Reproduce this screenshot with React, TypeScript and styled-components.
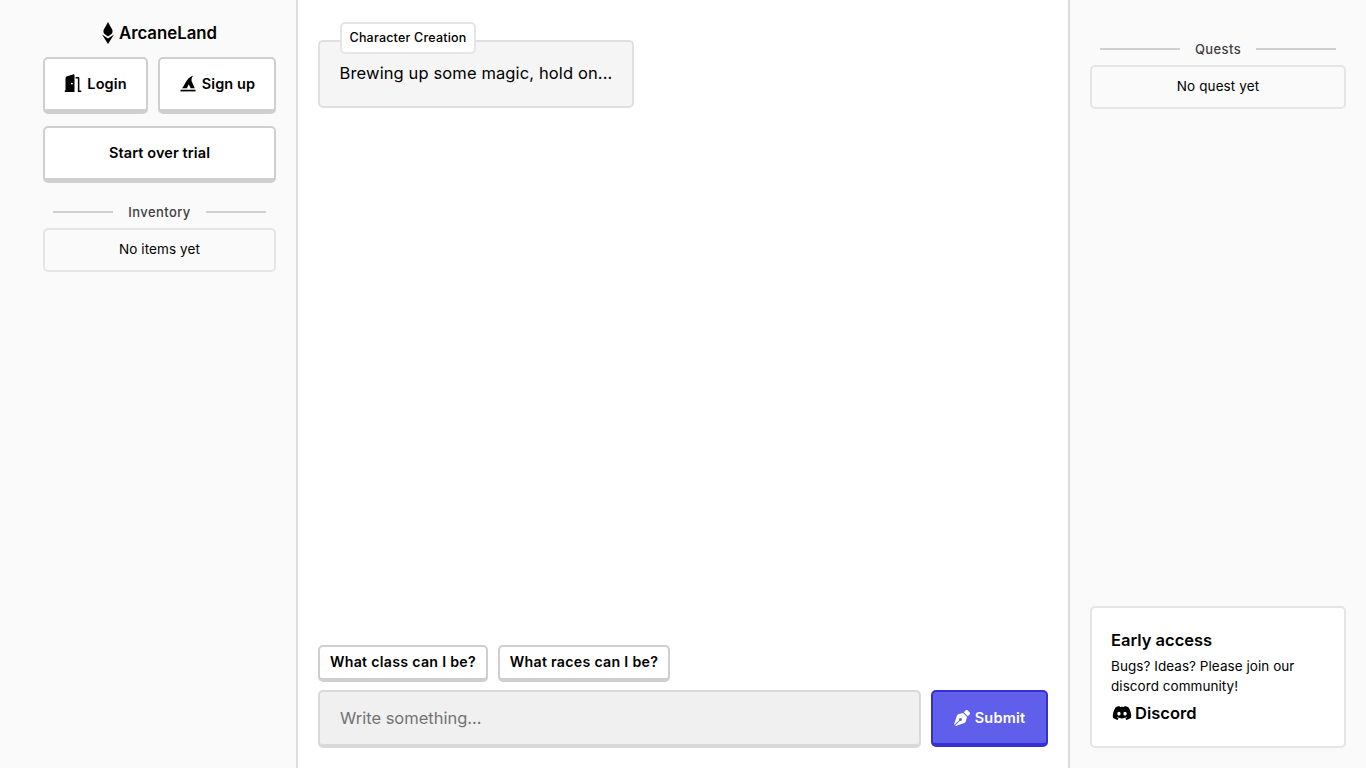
import { createGlobalStyle, styled } from "styled-components";
import { FaDiscord, FaPenNib } from "react-icons/fa";

const GlobalStyle = createGlobalStyle`
    html, body {
        margin: 0;
        padding: 0;
        height: 100%;
    }
    body {
        font-family: "Inter", "Liberation Sans", sans-serif;
        color: #000;
        background: #fff;
    }
    * {
        box-sizing: border-box;
    }
`;

const Page = styled.div`
    display: grid;
    grid-template-columns: 298px 772px 296px;
    height: 768px;
    overflow: hidden;
`;

const LeftSide = styled.aside`
    background-color: #fafafa;
    border-right: 2px solid #dcdcdc;
    padding: 20px 20px 0 43px;
    display: flex;
    flex-direction: column;
    width: 298px;
`;

const LeftInner = styled.div`
    width: 233px;
    display: flex;
    flex-direction: column;
`;

const Logo = styled.div`
    display: flex;
    align-items: center;
    justify-content: center;
    gap: 5px;
    height: 24px;
    font-size: 16.8px;
    font-weight: 600;
    margin-top: 1px;
    margin-bottom: 12px;
    svg {
        width: 12px;
        height: 22px;
    }
`;

const ButtonRow = styled.div`
    display: flex;
    gap: 10px;
    margin-bottom: 12px;
`;

const RaisedButton = styled.button<{ $width?: number }>`
    display: flex;
    align-items: center;
    justify-content: center;
    gap: 5px;
    width: ${(p) => (p.$width ? `${p.$width}px` : "auto")};
    height: 57px;
    padding: 0 4px 2px;
    background-color: #fff;
    border: 2px solid #cfcfcf;
    border-bottom-width: 5px;
    border-radius: 5px;
    color: #000;
    font-family: inherit;
    font-size: 14.5px;
    font-weight: 600;
    letter-spacing: 0.1px;
    white-space: nowrap;
    svg {
        width: 18px;
        height: 18px;
    }
`;

const InventorySection = styled.section`
    margin-top: 7px;
`;

const SectionTitle = styled.div`
    display: flex;
    align-items: center;
    gap: 15px;
    padding: 0 10px;
    height: 20px;
    font-size: 13px;
    font-weight: 500;
    letter-spacing: 0.4px;
    color: #404040;
    margin-bottom: 6px;
    &::before,
    &::after {
        content: "";
        flex: 1;
        height: 2px;
        background-color: #cfcfcf;
    }
`;

const EmptyBox = styled.div`
    height: 44px;
    padding-bottom: 2px;
    display: flex;
    align-items: center;
    justify-content: center;
    border: 2px solid #e5e5e5;
    border-radius: 5px;
    background-color: #fafafa;
    font-size: 13.5px;
    letter-spacing: 0.1px;
`;

const Main = styled.main`
    display: flex;
    flex-direction: column;
    justify-content: space-between;
    background-color: #fff;
    border-right: 2px solid #dcdcdc;
    padding: 40px 20px 20px 20px;
`;

const Bubble = styled.div`
    position: relative;
    width: 316px;
    height: 68px;
    padding-bottom: 2px;
    display: flex;
    align-items: center;
    justify-content: center;
    background-color: #f5f5f5;
    border: 2px solid #e0e0e0;
    border-radius: 5px;
    font-size: 16.5px;
    letter-spacing: 0.12px;
    white-space: nowrap;
`;

const BubbleTag = styled.span`
    position: absolute;
    left: 20px;
    top: -20px;
    height: 32px;
    width: 136px;
    padding-bottom: 1px;
    display: flex;
    align-items: center;
    justify-content: center;
    background-color: #fff;
    border: 2px solid #e5e5e5;
    border-radius: 5px;
    font-size: 12.5px;
    font-weight: 500;
    letter-spacing: 0.2px;
`;

const Composer = styled.div`
    display: flex;
    flex-direction: column;
    gap: 8px;
`;

const Suggestions = styled.div`
    display: flex;
    gap: 10px;
`;

const Suggestion = styled(RaisedButton)`
    height: 37px;
    font-size: 14.2px;
    letter-spacing: 0.28px;
    border-bottom-width: 4px;
`;

const InputRow = styled.div`
    display: flex;
    gap: 10px;
`;

const Input = styled.input`
    flex: 1;
    min-width: 0;
    height: 58px;
    padding: 0 20px;
    background-color: #f0f0f0;
    border: 2px solid #d9d9d9;
    border-bottom-width: 4px;
    border-radius: 5px;
    font-family: inherit;
    font-size: 16.5px;
    &::placeholder {
        color: #737373;
    }
`;

const SubmitButton = styled.button`
    width: 117px;
    height: 57px;
    display: flex;
    align-items: center;
    justify-content: center;
    gap: 5px;
    background-color: #5f5fec;
    border: 2px solid #3730d0;
    border-bottom-width: 4px;
    border-radius: 5px;
    color: #fff;
    font-family: inherit;
    font-size: 14.5px;
    font-weight: 600;
    letter-spacing: 0.2px;
    svg {
        width: 16px;
        height: 16px;
    }
`;

const RightSide = styled.aside`
    display: flex;
    flex-direction: column;
    justify-content: space-between;
    background-color: #fafafa;
    padding: 39px 20px 20px 20px;
`;

const RightTop = styled.div`
    display: flex;
    flex-direction: column;
`;

const InfoCard = styled.div`
    height: 142px;
    padding: 20px 19px;
    background-color: #fff;
    border: 2px solid #e5e5e5;
    border-radius: 5px;
`;

const InfoTitle = styled.h3`
    margin: 0 0 4px;
    font-size: 16.5px;
    line-height: 24px;
    font-weight: 600;
`;

const InfoText = styled.p`
    margin: 0 0 5px;
    font-size: 13.5px;
    line-height: 20px;
    letter-spacing: 0.05px;
`;

const DiscordLink = styled.a`
    display: flex;
    align-items: center;
    gap: 3px;
    padding-left: 1px;
    font-size: 16.5px;
    line-height: 24px;
    font-weight: 600;
    svg {
        width: 20px;
        height: 20px;
    }
`;

function LogoIcon() {
    return (
        <svg viewBox="0 0 12 22" fill="currentColor">
            <path d="M6 0 L9 5.5 C11 7.5 11 10.5 9.5 12 L6 14.5 L2.5 12 C1 10.5 1 7.5 3 5.5 Z" />
            <path d="M0 12.5 L6 16.5 L12 12.5 L6 22 Z" />
        </svg>
    );
}

function DoorIcon() {
    return (
        <svg viewBox="0 0 24 24" fill="currentColor">
            <path d="M1 24 V22 H2 V6 C2 4.5 3 3.5 4 3 L12 0.5 C13 0.2 14 1 14 2 V24 Z M10.5 11.5 A1.3 1.3 0 1 0 10.5 14.1 A1.3 1.3 0 1 0 10.5 11.5 Z" fillRule="evenodd" />
            <path d="M15.5 4 H19 C20 4 20.5 4.6 20.5 5.5 V22 H23 V24 H18.5 V6 H15.5 Z" />
        </svg>
    );
}

function HatIcon() {
    return (
        <svg viewBox="0 0 24 24" fill="currentColor">
            <path d="M4 19 C6 17 7 14 9 11 C11 7 14 4 19 2 C17 5 16 7 17 10 L21 19 H15.5 L13 13.5 L10.5 19 Z" />
            <rect x="2" y="21" width="20" height="2.2" />
        </svg>
    );
}

export default function App() {
    return (
        <Page>
            <GlobalStyle />
            <LeftSide>
                <LeftInner>
                    <Logo>
                        <LogoIcon />
                        ArcaneLand
                    </Logo>
                    <ButtonRow>
                        <RaisedButton $width={105}>
                            <DoorIcon />
                            Login
                        </RaisedButton>
                        <RaisedButton $width={118}>
                            <HatIcon />
                            Sign up
                        </RaisedButton>
                    </ButtonRow>
                    <ButtonRow>
                        <RaisedButton $width={233}>Start over trial</RaisedButton>
                    </ButtonRow>
                    <InventorySection>
                        <SectionTitle>Inventory</SectionTitle>
                        <EmptyBox>No items yet</EmptyBox>
                    </InventorySection>
                </LeftInner>
            </LeftSide>
            <Main>
                <Bubble>
                    <BubbleTag>Character Creation</BubbleTag>
                    Brewing up some magic, hold on...
                </Bubble>
                <Composer>
                    <Suggestions>
                        <Suggestion $width={170}>What class can I be?</Suggestion>
                        <Suggestion $width={172}>What races can I be?</Suggestion>
                    </Suggestions>
                    <InputRow>
                        <Input placeholder="Write something..." />
                        <SubmitButton>
                            <FaPenNib />
                            Submit
                        </SubmitButton>
                    </InputRow>
                </Composer>
            </Main>
            <RightSide>
                <RightTop>
                    <SectionTitle>Quests</SectionTitle>
                    <EmptyBox>No quest yet</EmptyBox>
                </RightTop>
                <InfoCard>
                    <InfoTitle>Early access</InfoTitle>
                    <InfoText>
                        Bugs? Ideas? Please join our
                        <br />
                        discord community!
                    </InfoText>
                    <DiscordLink>
                        <FaDiscord />
                        Discord
                    </DiscordLink>
                </InfoCard>
            </RightSide>
        </Page>
    );
}
